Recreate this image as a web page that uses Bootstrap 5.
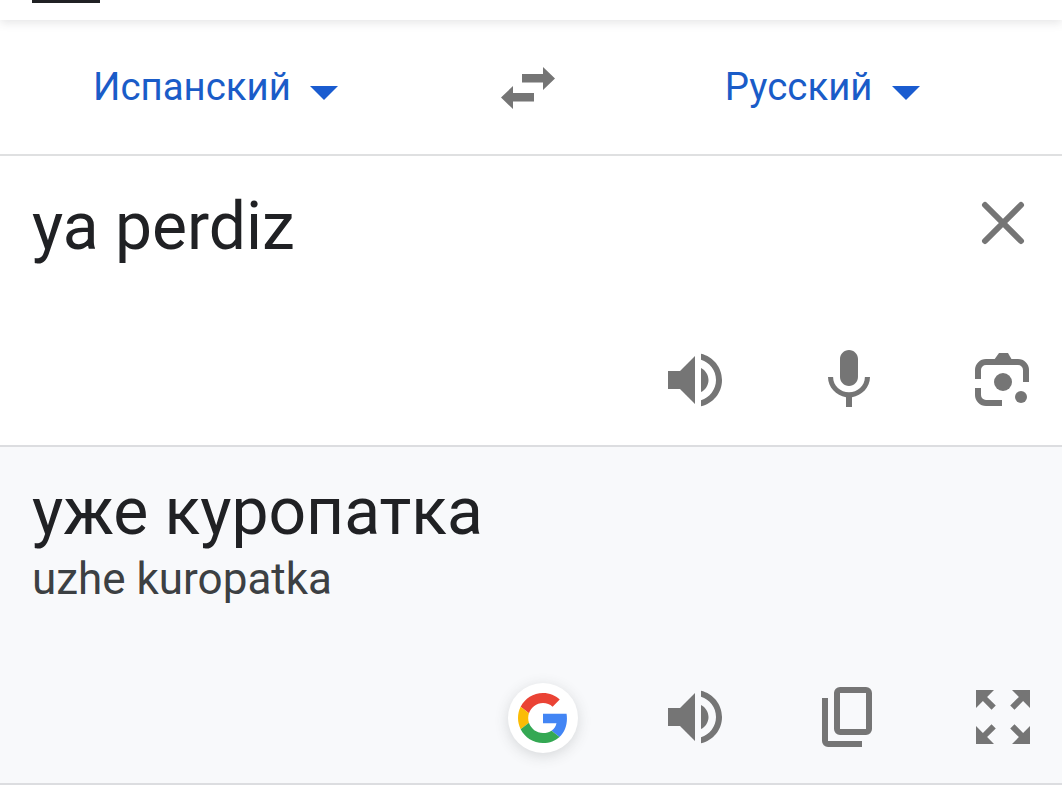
<!DOCTYPE html>
<html lang="ru">
<head>
<meta charset="utf-8">
<title>Переводчик</title>
<link href="https://cdn.jsdelivr.net/npm/bootstrap@5.3.0/dist/css/bootstrap.min.css" rel="stylesheet">
<style>
html, body { margin: 0; height: 100%; overflow: hidden; background: #fff; }
body { font-family: Roboto, "Liberation Sans", sans-serif; color: #202124; }
.topbar { height: 20px; background: #fff; padding-left: 32px; box-shadow: 0 3px 10px rgba(60,64,67,.13); position: relative; }
.toptab { width: 68px; height: 3px; background: #202124; }
.langbar { height: 136px; padding-left: 93px; border-bottom: 2px solid #dfe0e1; padding-bottom: 3px; }
.langbtn { color: #1a5cc8; font-size: 38.4px; line-height: 1; gap: 19px; border: 0; background: none; padding: 4px 0 0; }
.langbtn svg { margin-top: 10px; }
.swapico { margin: 4px 170px 0 163px; display: block; }
.srcpane { height: 291px; border-bottom: 2px solid #dcdde0; padding: 0 23px 0 32px; }
.srctext { font-size: 66px; line-height: 76px; padding-top: 33px; }
.closeico { margin: 45px 14px 0 0; display: block; }
.tools { height: 72px; margin-bottom: 29px; }
.tools svg, .tools-out svg { display: block; }
.gapa { margin-left: 82px; }
.gapb { margin-left: 82.5px; }
.outpane { height: 338px; background: #f8f9fb; border-bottom: 2px solid #dcdde0; padding: 0 23px 0 32px; }
.outtext { font-size: 66px; line-height: 76px; padding-top: 27px; }
.translit { font-size: 44px; line-height: 50px; color: #3c4043; margin-top: 4px; }
.tools-out { height: 72px; margin-bottom: 30px; }
.gbtn { width: 70px; height: 70px; background: #fff; box-shadow: 0 3px 14px rgba(60,64,67,.18); margin: 2px 80.500px 0 0; }
.icofill { fill: #757575; }
</style>
</head>
<body>
<div class="topbar"><div class="toptab"></div></div>

<div class="langbar d-flex align-items-center">
  <button class="langbtn d-flex align-items-center" type="button">Испанский
    <svg width="28" height="14" viewBox="0 0 28 14"><polygon points="0,0 28,0 14,14" fill="#1a5cd0"/></svg>
  </button>
  <svg class="swapico" width="54" height="42" viewBox="0 0 54 42"><path class="icofill" d="M21 7h21V0l12 11.500L42 23v-7.500H21zM33 26H12v-7L0 30.500 12 42v-7.500h21z"/></svg>
  <button class="langbtn d-flex align-items-center" type="button">Русский
    <svg width="28" height="14" viewBox="0 0 28 14"><polygon points="0,0 28,0 14,14" fill="#1a5cd0"/></svg>
  </button>
</div>

<div class="srcpane d-flex flex-column justify-content-between">
  <div class="d-flex justify-content-between align-items-start">
    <div class="srctext">ya perdiz</div>
    <svg class="closeico" width="44" height="44" viewBox="0 0 44 44"><path d="M4 4l36 36M40 4L4 40" stroke="#757575" stroke-width="6" stroke-linecap="round" fill="none"/></svg>
  </div>
  <div class="tools d-flex justify-content-end">
    <svg width="72" height="72" viewBox="0 0 24 24"><path class="icofill" d="M3 9v6h4l5 5V4L7 9H3zm13.500 3c0-1.770-1.020-3.290-2.500-4.030v8.050c1.480-.73 2.500-2.250 2.500-4.020zM14 3.230v2.060c2.890.86 5 3.540 5 6.710s-2.110 5.850-5 6.710v2.060c4.010-.91 7-4.490 7-8.770s-2.990-7.860-7-8.770z"/></svg>
    <svg class="gapb" width="72" height="72" viewBox="0 0 24 24"><path class="icofill" d="M12 14c1.660 0 2.990-1.340 2.990-3L15 5c0-1.660-1.340-3-3-3S9 3.340 9 5v6c0 1.660 1.340 3 3 3zm5.300-3c0 3-2.540 5.100-5.300 5.100S6.700 14 6.700 11H5c0 3.410 2.720 6.230 6 6.720V21h2v-3.280c3.280-.48 6-3.300 6-6.720h-1.700z"/></svg>
    <svg class="gapa" width="72" height="72" viewBox="0 0 72 72">
      <path d="M11 35V26a8 8 0 0 1 8-8h32a8 8 0 0 1 8 8v12M11 44v7a8 8 0 0 0 8 8h16" fill="none" stroke="#757575" stroke-width="6"/>
      <polygon class="icofill" points="27,16 32,9 41,9 45,16"/>
      <circle class="icofill" cx="36" cy="38" r="9"/>
      <circle class="icofill" cx="54" cy="53" r="6"/>
    </svg>
  </div>
</div>

<div class="outpane d-flex flex-column justify-content-between">
  <div>
    <div class="outtext">уже куропатка</div>
    <div class="translit">uzhe kuropatka</div>
  </div>
  <div class="tools-out d-flex justify-content-end align-items-center">
    <div class="gbtn rounded-circle d-flex align-items-center justify-content-center">
      <svg width="50" height="50" viewBox="0 0 48 48">
        <path fill="#EA4335" d="M24 9.500c3.540 0 6.710 1.220 9.210 3.600l6.850-6.850C35.900 2.380 30.470 0 24 0 14.620 0 6.510 5.380 2.560 13.220l7.980 6.190C12.430 13.720 17.740 9.500 24 9.500z"/>
        <path fill="#4285F4" d="M46.980 24.550c0-1.570-.15-3.090-.38-4.550H24v9.020h12.940c-.58 2.960-2.260 5.480-4.780 7.180l7.730 6c4.510-4.180 7.090-10.360 7.090-17.650z"/>
        <path fill="#FBBC05" d="M10.530 28.590c-.48-1.450-.76-2.990-.76-4.590s.27-3.140.76-4.590l-7.980-6.190C.92 16.460 0 20.120 0 24c0 3.880.92 7.540 2.560 10.780l7.970-6.190z"/>
        <path fill="#34A853" d="M24 48c6.480 0 11.930-2.130 15.890-5.810l-7.730-6c-2.150 1.450-4.920 2.300-8.160 2.300-6.260 0-11.570-4.220-13.470-9.910l-7.980 6.190C6.510 42.620 14.620 48 24 48z"/>
      </svg>
    </div>
    <svg width="72" height="72" viewBox="0 0 24 24"><path class="icofill" d="M3 9v6h4l5 5V4L7 9H3zm13.500 3c0-1.770-1.020-3.290-2.500-4.030v8.050c1.480-.73 2.500-2.250 2.500-4.020zM14 3.230v2.060c2.890.86 5 3.540 5 6.710s-2.110 5.850-5 6.710v2.060c4.010-.91 7-4.490 7-8.770s-2.990-7.860-7-8.770z"/></svg>
    <svg class="gapb" width="72" height="72" viewBox="0 0 72 72">
      <path d="M12 17v43a3 3 0 0 0 3 3h34" fill="none" stroke="#757575" stroke-width="6"/>
      <rect x="24" y="9" width="32" height="42" rx="3" fill="none" stroke="#757575" stroke-width="6"/>
    </svg>
    <svg class="gapa" width="72" height="72" viewBox="0 0 24 24"><path class="icofill" d="M15 3l2.300 2.300-2.890 2.870 1.420 1.420L18.700 6.700 21 9V3h-6zM3 9l2.300-2.300 2.870 2.890 1.420-1.420L6.700 5.300 9 3H3v6zm6 12l-2.300-2.300 2.890-2.870-1.420-1.420L5.300 17.300 3 15v6h6zm12-6l-2.300 2.300-2.870-2.890-1.420 1.420 2.890 2.870L15 21h6v-6z"/></svg>
  </div>
</div>
<script src="https://cdn.jsdelivr.net/npm/bootstrap@5.3.0/dist/js/bootstrap.bundle.min.js"></script>
</body>
</html>
